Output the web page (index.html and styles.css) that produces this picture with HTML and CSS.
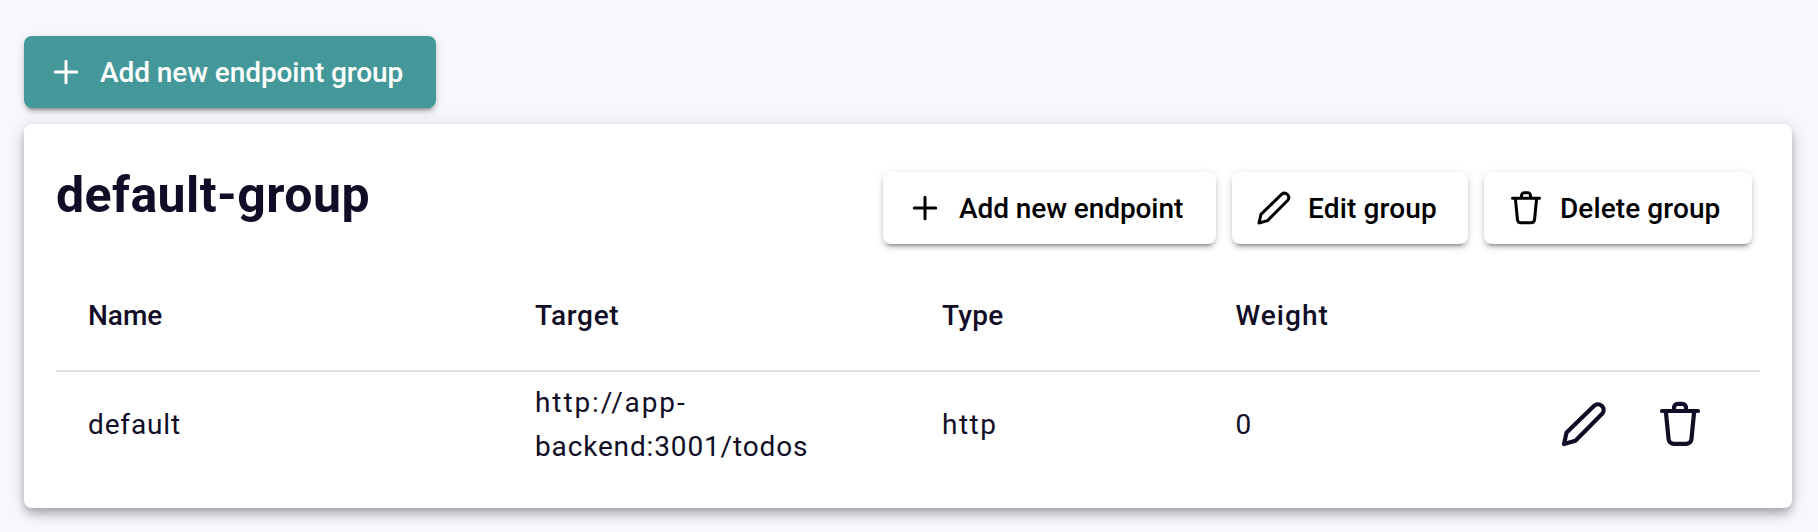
FILE: index.html
```
<!DOCTYPE html>
<html lang="en">
<head>
<meta charset="utf-8">
<title>Endpoint groups</title>
<link rel="stylesheet" href="styles.css">
</head>
<body>
<svg class="sprite" aria-hidden="true">
  <symbol id="plus" viewBox="0 0 48 48"><path d="M24 9.7V38.3M9.7 24H38.3"/></symbol>
  <symbol id="pencil" viewBox="0 0 48 48"><path d="M4 44L6.6 32.4L34.4 5.6a5.7 5.7 0 0 1 8 8L15.4 40.8Z"/></symbol>
  <symbol id="trash" viewBox="0 0 48 48"><path d="M6 11H42M18 11V7.5a3.7 3.7 0 0 1 3.7-3.7H26.3a3.7 3.7 0 0 1 3.7 3.7V11M9.8 11L12.6 39.4a5 5 0 0 0 4.8 4.4H30.6a5 5 0 0 0 4.8-4.4L38.2 11"/></symbol>
</svg>
<button class="btn btn-primary"><svg class="icon"><use href="#plus"/></svg><span class="t-add-group">Add new endpoint group</span></button>
<main class="card">
  <header class="card-head">
    <h2>default-group</h2>
    <div class="actions">
      <button class="btn btn-add"><svg class="icon"><use href="#plus"/></svg><span class="t-add">Add new endpoint</span></button>
      <button class="btn btn-edit"><svg class="icon"><use href="#pencil"/></svg><span class="t-edit">Edit group</span></button>
      <button class="btn btn-delete"><svg class="icon"><use href="#trash"/></svg><span class="t-delete">Delete group</span></button>
    </div>
  </header>
  <section class="table">
    <div class="row head">
      <span class="t-name">Name</span><span class="t-target">Target</span><span class="t-type">Type</span><span class="t-weight">Weight</span>
    </div>
    <div class="row">
      <span>default</span>
      <span><span class="t-host">http://app-</span><br>backend:3001/todos</span>
      <span class="t-http">http</span>
      <span>0</span>
      <div class="row-actions"><svg class="icon-lg"><use href="#pencil"/></svg><svg class="icon-lg"><use href="#trash"/></svg></div>
    </div>
  </section>
</main>
</body>
</html>
```
FILE: styles.css
```
* { box-sizing: border-box; }
body {
  margin: 0;
  padding: 36px 26px 0 24px;
  height: 532px;
  overflow: hidden;
  background: #f7f8fe;
  color: #110d26;
  font-family: Roboto, "Liberation Sans", sans-serif;
  font-size: 28px;
}
.sprite { display: none; }
.icon, .icon-lg {
  flex: none;
  fill: none;
  stroke: currentColor;
  stroke-width: 4;
  stroke-linecap: round;
  stroke-linejoin: round;
}
.icon { width: 36px; height: 36px; }
.icon-lg { width: 48px; height: 48px; stroke-width: 4.2; }

.btn {
  display: flex;
  align-items: center;
  gap: 16px;
  height: 72px;
  padding: 0 0 0 24px;
  border: 0;
  border-radius: 8px;
  background: #fff;
  color: #000;
  font: 500 28px/44px Roboto, "Liberation Sans", sans-serif;
  white-space: nowrap;
  box-shadow: 0 6px 2px -4px rgba(0,0,0,.2), 0 4px 4px rgba(0,0,0,.14), 0 2px 10px rgba(0,0,0,.12);
}
.btn > span, .row > span { padding-top: 2px; }
.btn-primary { width: 412px; background: #449899; color: #fff; }
.btn-add { width: 333px; }
.btn-edit { width: 236px; }
.btn-delete { width: 268px; }

.card {
  height: 384px;
  margin-top: 16px;
  padding: 48px 32px 0;
  border-radius: 8px;
  background: #fff;
  box-shadow: 0 4px 8px -2px rgba(0,0,0,.2), 0 8px 10px rgba(0,0,0,.14), 0 2px 20px rgba(0,0,0,.12);
}
.card-head {
  display: flex;
  justify-content: space-between;
  height: 88px;
  padding-right: 8px;
}
h2 {
  margin: -8px 0 0;
  font-size: 50px;
  font-weight: 700;
  line-height: 62px;
  letter-spacing: .45px;
}
.actions { display: flex; gap: 16px; }

.row {
  display: grid;
  grid-template-columns: 447px 407px 293.5px 292px 1fr;
  align-items: center;
  height: 104px;
  padding-left: 32px;
  line-height: 44px;
  letter-spacing: .85px;
}
.head {
  height: 112px;
  border-bottom: 2px solid #e0e0e0;
  font-weight: 500;
}
.row-actions { display: flex; gap: 48px; margin-left: 32.5px; }

/* per-label tracking */
.t-add-group { letter-spacing: -.08px; }
.t-add { letter-spacing: -.08px; }
.t-edit { letter-spacing: .16px; }
.t-delete { letter-spacing: .09px; }
.t-name { letter-spacing: 0; }
.t-target { letter-spacing: .7px; }
.t-type { letter-spacing: .25px; }
.t-weight { letter-spacing: 1.04px; }
.t-host { letter-spacing: 1.9px; }
.t-http { letter-spacing: 1.5px; }
```
